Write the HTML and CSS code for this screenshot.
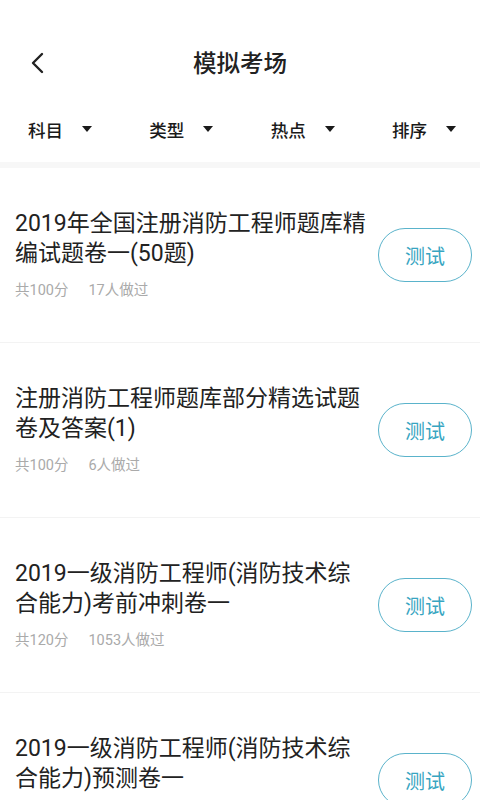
FILE: index.html
```html
<!DOCTYPE html>
<html lang="zh-CN">
<head>
  <meta charset="UTF-8" />
  <meta name="viewport" content="width=device-width, initial-scale=1" />
  <title>模拟考场</title>
  <link rel="stylesheet" href="styles.css">
</head>
<body>
  <div class="topbar">
    <span class="back">
      <svg width="14" height="22" viewBox="0 0 14 22"><path d="M12 2 L3 11 L12 20" fill="none" stroke="#222" stroke-width="2.4" stroke-linecap="round" stroke-linejoin="round"/></svg>
    </span>
    <h1>模拟考场</h1>
  </div>

  <div class="filters">
    <div class="filter">科目<span class="caret"></span></div>
    <div class="filter">类型<span class="caret"></span></div>
    <div class="filter">热点<span class="caret"></span></div>
    <div class="filter">排序<span class="caret"></span></div>
  </div>

  <div class="list">
    <div class="item">
      <div class="info">
        <div class="title">2019年全国注册消防工程师题库精编试题卷一(50题)</div>
        <div class="meta"><span>共100分</span><span>17人做过</span></div>
      </div>
      <button class="btn">测试</button>
    </div>
    <div class="item">
      <div class="info">
        <div class="title">注册消防工程师题库部分精选试题卷及答案(1)</div>
        <div class="meta"><span>共100分</span><span>6人做过</span></div>
      </div>
      <button class="btn">测试</button>
    </div>
    <div class="item">
      <div class="info">
        <div class="title">2019一级消防工程师(消防技术综合能力)考前冲刺卷一</div>
        <div class="meta"><span>共120分</span><span>1053人做过</span></div>
      </div>
      <button class="btn">测试</button>
    </div>
    <div class="item">
      <div class="info">
        <div class="title">2019一级消防工程师(消防技术综合能力)预测卷一</div>
        <div class="meta"><span>共120分</span><span>862人做过</span></div>
      </div>
      <button class="btn">测试</button>
    </div>
  </div>
</body>
</html>
```

FILE: styles.css
```css
body {
  margin: 0;
  background-color: #ffffff;
  color: #222222;
  font-family: Roboto, "Noto Sans CJK SC", sans-serif;
  overflow: hidden;
}

.topbar {
  position: relative;
  height: 96px;
  padding-top: 32px;
  box-sizing: border-box;
  text-align: center;
}

.back {
  position: absolute;
  left: 30px;
  top: 52px;
  width: 14px;
  height: 22px;
}

.back svg {
  display: block;
}

h1 {
  margin: 0;
  font-size: 23.5px;
  font-weight: 500;
  line-height: 64px;
}

.filters {
  display: flex;
  justify-content: space-between;
  align-items: center;
  height: 66px;
  padding: 0 24px 0 28px;
  border-bottom: 6px solid #f7f7f7;
}

.filter {
  display: flex;
  align-items: center;
  font-size: 17.5px;
  font-weight: 500;
  color: #1a1a1a;
}

.caret {
  width: 0;
  height: 0;
  margin-left: 19px;
  border-left: 5.5px solid transparent;
  border-right: 5.5px solid transparent;
  border-top: 6px solid #1a1a1a;
}

.item {
  display: flex;
  align-items: center;
  height: 175px;
  padding: 0 8px 0 15px;
  box-sizing: border-box;
  border-bottom: 1px solid #f3f3f3;
}

.info {
  flex: none;
  width: 354px;
}

.title {
  font-size: 23px;
  line-height: 30px;
  color: #222222;
}

.meta {
  margin-top: 12px;
  font-size: 14.5px;
  line-height: 20px;
  color: #aaaaaa;
}

.meta span {
  margin-right: 20px;
}

.btn {
  flex: none;
  width: 94px;
  height: 54px;
  margin-left: auto;
  border: 1.5px solid #5ab3cb;
  border-radius: 27px;
  background: #ffffff;
  color: #37a5c1;
  font-family: Roboto, "Noto Sans CJK SC", sans-serif;
  font-size: 20px;
  padding: 0;
}
```
